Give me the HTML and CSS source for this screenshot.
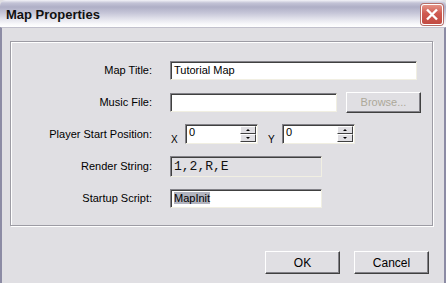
FILE: index.html
```html
<!DOCTYPE html>
<html lang="en">

<head>
    <meta charset="UTF-8">
    <title>Map Properties</title>
    <link rel="stylesheet" href="styles.css">
</head>

<body>
    <div class="window">
        <div class="titlebar">
            <span class="title">Map Properties</span>
            <span class="close-btn">
                <svg width="14" height="13" viewBox="0 0 14 13">
                    <path d="M2 1.5 L12 11.5 M12 1.5 L2 11.5" stroke="#fff" stroke-width="2.4" fill="none" />
                </svg>
            </span>
        </div>

        <div class="client">
            <div class="group-box">
                <div class="form-grid">
                    <label class="label">Map Title:</label>
                    <div class="row">
                        <div class="field field-title">Tutorial Map</div>
                    </div>

                    <label class="label">Music File:</label>
                    <div class="row">
                        <div class="field field-music"></div>
                        <div class="btn btn-browse">Browse...</div>
                    </div>

                    <label class="label">Player Start Position:</label>
                    <div class="row">
                        <span class="axis axis-x">X</span>
                        <div class="field spin">
                            <span class="spin-value">0</span>
                            <span class="spin-btns">
                                <span class="spin-btn"><i class="arrow-up"></i></span>
                                <span class="spin-btn"><i class="arrow-down"></i></span>
                            </span>
                        </div>
                        <span class="axis axis-y">Y</span>
                        <div class="field spin">
                            <span class="spin-value">0</span>
                            <span class="spin-btns">
                                <span class="spin-btn"><i class="arrow-up"></i></span>
                                <span class="spin-btn"><i class="arrow-down"></i></span>
                            </span>
                        </div>
                    </div>

                    <label class="label">Render String:</label>
                    <div class="row">
                        <div class="field field-short field-readonly">1,2,R,E</div>
                    </div>

                    <label class="label">Startup Script:</label>
                    <div class="row">
                        <div class="field field-short"><span class="selected">MapInit</span></div>
                    </div>
                </div>
            </div>

            <div class="buttons">
                <div class="btn">OK</div>
                <div class="btn">Cancel</div>
            </div>
        </div>
    </div>
</body>

</html>
```

FILE: styles.css
```css
* {
    margin: 0;
    padding: 0;
    box-sizing: border-box;
}

body {
    font-family: "Liberation Sans", Arial, sans-serif;
    font-size: 11px;
    color: #000;
    background: #e0dfe3;
}

.window {
    width: 446px;
    height: 283px;
    overflow: hidden;
    border-radius: 6px 6px 0 0;
}

/* Title bar */
.titlebar {
    height: 27px;
    display: flex;
    justify-content: space-between;
    align-items: flex-start;
    padding: 0 3px 0 6px;
    background: linear-gradient(to bottom, #f4f4f8 0px, #c3c3d6 3px, #afafc6 7px, #c6c6d8 13px, #e3e3ec 19px, #f8f8fb 24px, #ffffff 27px);
}

.title {
    font-size: 13px;
    font-weight: bold;
    color: #111;
    margin-top: 7px;
}

.close-btn {
    width: 22px;
    height: 21px;
    margin-top: 4px;
    border-radius: 3px;
    border: 1px solid #fff;
    box-shadow: 0 0 0 1px #b7706a;
    background: linear-gradient(to bottom, #e49286 0%, #cf5a50 45%, #c24a42 100%);
    display: flex;
    justify-content: center;
    align-items: center;
}

/* Window body */
.client {
    height: 256px;
    border-left: 2px solid #8c8ba4;
    border-right: 2px solid #8c8ba4;
    border-top: 1px solid #c2c1cd;
    padding: 13px 11px 0 8px;
}

.group-box {
    height: 185px;
    border: 1px solid #9d9ca4;
    box-shadow: 1px 1px 0 #fff, inset 1px 1px 0 #fff;
    padding-top: 18px;
}

.form-grid {
    display: grid;
    grid-template-columns: 141px 1fr;
    grid-auto-rows: 20px;
    column-gap: 18px;
    row-gap: 12px;
}

.label {
    text-align: right;
    align-self: center;
}

.row {
    display: flex;
    align-items: center;
}

/* Sunken text fields */
.field {
    height: 19px;
    background: #fff;
    border: 1px solid;
    border-color: #838288 #f1efe2 #f1efe2 #838288;
    box-shadow: inset 1px 1px 0 #404040;
    padding: 1px 0 0 3px;
    line-height: 15px;
    white-space: nowrap;
}

.field-title {
    width: 247px;
}

.field-music {
    width: 167px;
}

.field-short {
    width: 152px;
}

.field-readonly {
    height: 21px;
    background: #e0dfe3;
    font-family: "Liberation Mono", "Courier New", monospace;
    font-size: 13px;
    line-height: 17px;
    color: #111;
}

.selected {
    background: #b2b4bf;
}

/* Spin boxes */
.axis {
    align-self: flex-end;
    font-size: 10px;
    line-height: 9px;
}

.axis-x {
    width: 15px;
    padding-left: 1px;
}

.axis-y {
    width: 24px;
    padding-left: 10px;
}

.spin {
    width: 73px;
    height: 20px;
    display: flex;
    justify-content: space-between;
    padding: 0 1px 0 3px;
}

.spin-value {
    line-height: 14px;
}

.spin-btns {
    display: flex;
    flex-direction: column;
    justify-content: center;
}

.spin-btn {
    width: 16px;
    height: 8px;
    background: #e0dfe3;
    border: 1px solid;
    border-color: #fff #404040 #404040 #fff;
    display: flex;
    justify-content: center;
    align-items: center;
}

.arrow-up,
.arrow-down {
    width: 0;
    height: 0;
    border-left: 2px solid transparent;
    border-right: 2px solid transparent;
}

.arrow-up {
    border-bottom: 2px solid #000;
}

.arrow-down {
    border-top: 2px solid #000;
}

/* Raised buttons */
.btn {
    width: 75px;
    height: 23px;
    background: #e0dfe3;
    border: 1px solid;
    border-color: #fff #404040 #404040 #fff;
    box-shadow: inset -1px -1px 0 #838288;
    display: flex;
    justify-content: center;
    align-items: center;
    font-size: 12px;
}

.btn-browse {
    height: 21px;
    margin-left: 9px;
    color: #aca899;
    font-size: 11px;
}

.buttons {
    display: flex;
    justify-content: flex-end;
    gap: 14px;
    margin-top: 25px;
    padding-right: 4px;
}
```
